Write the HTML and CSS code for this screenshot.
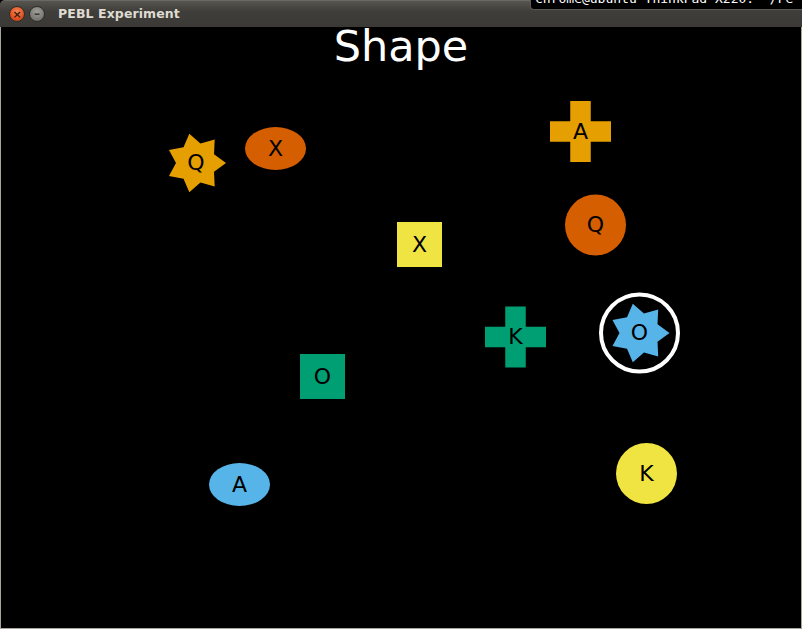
FILE: index.html
```html
<!DOCTYPE html>
<html>
<head>
<meta charset="utf-8">
<title>PEBL Experiment</title>
<link rel="stylesheet" href="styles.css">
</head>
<body>
<div class="window">
  <div class="titlebar">
    <div class="buttons">
      <span class="btn btn-close">×</span>
      <span class="btn btn-min">–</span>
    </div>
    <div class="wtitle">PEBL Experiment</div>
  </div>
  <div class="content">
    <h1 class="heading">Shape</h1>
    <svg class="canvas" viewBox="1 27 800 601" width="800" height="601" xmlns="http://www.w3.org/2000/svg">
      <defs>
        <polygon id="star" points="30,0 18.02,8.68 18.7,23.45 4.45,19.5 -6.68,29.25 -12.47,15.64 -27.03,13.02 -20,0 -27.03,-13.02 -12.47,-15.64 -6.68,-29.25 4.45,-19.5 18.7,-23.45 18.02,-8.68"/>
        <path id="cross" d="M-10.25,-30.5 H10.25 V-10.25 H30.5 V10.25 H10.25 V30.5 H-10.25 V10.25 H-30.5 V-10.25 H-10.25 Z"/>
      </defs>
      <g class="shapes">
        <use href="#star" x="196" y="163" fill="#e69f00"/>
        <text x="196" y="170">Q</text>

        <ellipse cx="275.5" cy="148.5" rx="30.5" ry="21.5" fill="#d55e00"/>
        <text x="275.5" y="155.5">X</text>

        <use href="#cross" x="580.5" y="131.5" fill="#e69f00"/>
        <text x="580.5" y="138.5">A</text>

        <circle cx="595.5" cy="225" r="30.5" fill="#d55e00"/>
        <text x="595.5" y="232">Q</text>

        <rect x="397" y="222" width="45" height="45" fill="#f0e442"/>
        <text x="419.5" y="251.5">X</text>

        <circle cx="639.5" cy="333" r="38.5" fill="none" stroke="#ffffff" stroke-width="4"/>
        <use href="#star" x="639.5" y="333" fill="#56b4e9"/>
        <text x="639.5" y="340">O</text>

        <use href="#cross" x="515.5" y="337" fill="#009e73"/>
        <text x="515.5" y="344">K</text>

        <rect x="300" y="354" width="45" height="45" fill="#009e73"/>
        <text x="322.5" y="383.5">O</text>

        <ellipse cx="239.5" cy="484.5" rx="30.5" ry="21.5" fill="#56b4e9"/>
        <text x="239.5" y="491.5">A</text>

        <circle cx="646.5" cy="473.5" r="30.5" fill="#f0e442"/>
        <text x="646.5" y="480.5">K</text>
      </g>
    </svg>
  </div>
  <div class="overlay-term"><span class="term-text">chrome@ubuntu-ThinkPad-X220: ~/Pe</span></div>
</div>
</body>
</html>
```

FILE: styles.css
```css
html, body {
  margin: 0;
  padding: 0;
  background: #000;
}

.window {
  position: relative;
  width: 802px;
  height: 629px;
  display: flex;
  flex-direction: column;
  overflow: hidden;
  font-family: "DejaVu Sans", sans-serif;
}

.titlebar {
  height: 27px;
  flex: 0 0 27px;
  display: flex;
  align-items: center;
  background: linear-gradient(#56554f, #3f3e3a 40%, #3a3935);
  border-top: 1px solid #6a6963;
  box-sizing: border-box;
  border-radius: 5px 5px 0 0;
}

.buttons {
  display: flex;
  gap: 4px;
  padding-left: 9px;
}

.btn {
  width: 16px;
  height: 16px;
  border-radius: 50%;
  display: flex;
  align-items: center;
  justify-content: center;
  font-size: 11px;
  line-height: 1;
  font-weight: bold;
  box-sizing: border-box;
}

.btn-close {
  background: radial-gradient(circle at 50% 35%, #f58a5c, #e0501f 60%, #b83a12);
  color: #3a1a0c;
  border: 1px solid #2e2d2a;
}

.btn-min {
  background: radial-gradient(circle at 50% 35%, #a09f99, #7d7c76 60%, #5f5e59);
  color: #3c3b37;
  border: 1px solid #2e2d2a;
  font-size: 12px;
}

.wtitle {
  margin-left: 13px;
  color: #dfdbd2;
  font-weight: bold;
  font-size: 12.5px;
  letter-spacing: 0.1px;
  padding-bottom: 1px;
}

.content {
  position: relative;
  flex: 1;
  background: #000;
  border-left: 1px solid #a7a49c;
  border-right: 1px solid #a7a49c;
  border-bottom: 1px solid #a7a49c;
}

.heading {
  margin: 2px 0 0 0;
  text-align: center;
  color: #fff;
  font-family: "DejaVu Sans", sans-serif;
  font-weight: normal;
  font-size: 43px;
  line-height: 34px;
  position: relative;
  z-index: 1;
}

.canvas {
  position: absolute;
  left: 0;
  top: 0;
  display: block;
}

.shapes text {
  font-family: "DejaVu Sans", sans-serif;
  font-size: 22px;
  fill: #000;
  text-anchor: middle;
}

.overlay-term {
  position: absolute;
  top: 0;
  left: 530px;
  width: 272px;
  height: 9px;
  background: #000;
  border-bottom-left-radius: 4px;
  border-left: 1px solid #5a5954;
  border-bottom: 1px solid #5a5954;
  overflow: hidden;
}

.term-text {
  position: absolute;
  left: 4px;
  top: -8px;
  color: #fff;
  font-family: "DejaVu Sans Mono", monospace;
  font-size: 13px;
  line-height: 14px;
  white-space: nowrap;
}
```
